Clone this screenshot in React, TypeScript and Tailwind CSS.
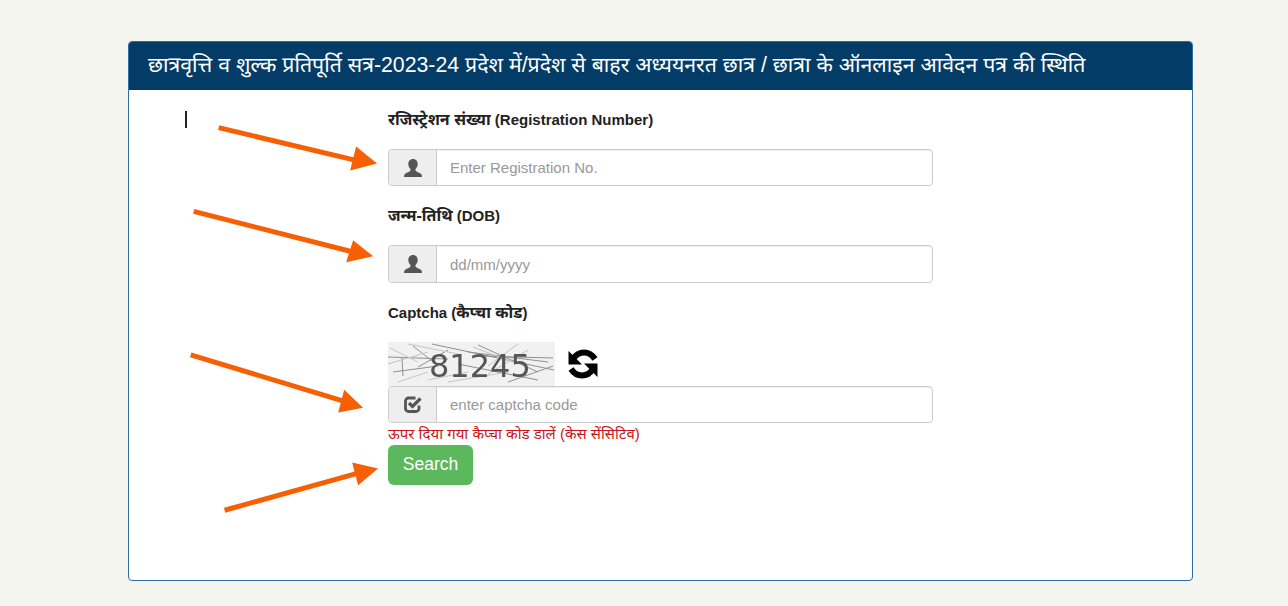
import type { ReactNode } from "react"

const font = "font-['Liberation_Sans','Noto_Sans','Noto_Sans_Devanagari','Lohit_Devanagari',sans-serif]"

function UserIcon() {
  return (
    <svg viewBox="0 0 18 18" className="h-[18px] w-[18px]" fill="#555">
      <path d="M9 0C5.800 0 4.300 2.400 4.300 5C4.300 7.200 5.300 9 6.500 10C6.700 11 6.500 11.800 5.800 12.300C4.500 13.300 1.200 14 .5 15.500C.2 16.200 0 17 0 18H18C18 17 17.800 16.200 17.500 15.500C16.800 14 13.500 13.300 12.200 12.300C11.500 11.800 11.300 11 11.500 10C12.700 9 13.700 7.200 13.700 5C13.700 2.400 12.200 0 9 0Z" />
    </svg>
  )
}

function CheckIcon() {
  return (
    <svg viewBox="0 0 18 17" className="h-[17px] w-[18px]" fill="none" stroke="#555" strokeWidth="2.800">
      <path d="M11.500 2H4.500a3 3 0 0 0-3 3v7.500a3 3 0 0 0 3 3h7.500a3 3 0 0 0 3-3v-3" />
      <path d="M5 7l3.500 3.500L16.500 2.500" strokeWidth="3.200" />
    </svg>
  )
}

function RefreshIcon() {
  return (
    <svg viewBox="0 0 30 30" className="h-[30px] w-[30px]">
      <path d="M5 10C8 5.500 12 3.500 16 3.500C20 3.500 24 5.500 27 10" fill="none" stroke="#000" strokeWidth="6" />
      <path d="M.5 2V15.500H14Z" fill="#000" />
      <g transform="rotate(180 15 15)">
        <path d="M5 10C8 5.500 12 3.500 16 3.500C20 3.500 24 5.500 27 10" fill="none" stroke="#000" strokeWidth="6" />
        <path d="M.5 2V15.500H14Z" fill="#000" />
      </g>
    </svg>
  )
}

function InputRow({ icon, placeholder, className }: { icon: ReactNode; placeholder: string; className: string }) {
  return (
    <div className={`flex w-[545px] rounded border border-[#ccc] bg-white shadow-[inset_0_1px_1px_rgba(0,0,0,0.075)] ${className}`}>
      <div className="flex w-[48px] items-center justify-center rounded-l border-r border-[#ccc] bg-[#eee]">{icon}</div>
      <input
        placeholder={placeholder}
        className="min-w-0 flex-1 bg-transparent px-[13px] pt-[2px] text-[15px] text-[#555] outline-none placeholder:text-[#999]"
      />
    </div>
  )
}

function Captcha() {
  return (
    <div className="relative h-[44px] w-[167px] overflow-hidden bg-[#f1f1f1]">
      <svg viewBox="0 0 167 44" className="absolute inset-0 h-full w-full blur-[0.6px]" stroke="#8f8f8f" strokeWidth="1" fill="none">
        <path d="M0 15 L60 17 M14 16 L15 34 M5 30 L50 24 M44 2 L166 28 M60 8 L30 25 M90 14 L165 16 M120 40 L165 24 M70 22 L150 38 M25 4 L48 22 M80 10 L160 20 M90 3 L150 30" />
        <path d="M2 6 L30 20 M85 5 L130 22 M40 38 L80 30 M0 22 L40 10 M10 40 L40 30 M130 2 L100 24 M60 40 L120 30 M20 2 L70 12 M100 32 L140 8" stroke="#c4c4c4" />
      </svg>
      <span className="absolute left-[41px] top-[5px] font-['DejaVu_Sans',sans-serif] text-[32px] leading-[38px] text-[#555] blur-[0.4px]">81245</span>
    </div>
  )
}

export default function App() {
  return (
    <div className={`${font} min-h-[606px] bg-[#f5f5f0] px-[128px] pt-[41px] text-[#222]`}>
      <div className="relative h-[540px] w-[1065px] overflow-hidden rounded border border-[#2e6da4] bg-white">
        <div className="flex h-[48px] items-center whitespace-nowrap bg-[#033c66] pb-[1px] pl-[19px] text-[21.3px] text-white">
          छात्रवृत्ति व शुल्क प्रतिपूर्ति सत्र-2023-24 प्रदेश में/प्रदेश से बाहर अध्ययनरत छात्र / छात्रा के ऑनलाइन आवेदन पत्र की स्थिति
        </div>

        <div className="flex pl-[56px] pt-[19px]">
          <div className="mt-[2px] h-[17px] w-[2px] bg-[#222]" />
          <div className="ml-[201px] flex flex-col">
            <label className="h-[20px] text-[15px] font-bold leading-[22px]">
              <span className="text-[16px]">रजिस्ट्रेशन संख्या</span> (Registration Number)
            </label>
            <div className="mt-[20px]">
              <InputRow className="h-[37px]" icon={<UserIcon />} placeholder="Enter Registration No." />
            </div>
            <label className="mt-[19px] h-[20px] text-[15px] font-bold leading-[22px]">
              <span className="text-[16px]">जन्म-तिथि</span> (DOB)
            </label>
            <div className="mt-[20px]">
              <InputRow className="h-[38px]" icon={<UserIcon />} placeholder="dd/mm/yyyy" />
            </div>
            <label className="mt-[19px] h-[20px] text-[15px] font-bold leading-[22px]">
              Captcha (<span className="text-[16px]">कैप्चा कोड</span>)
            </label>
            <div className="mt-[20px] flex items-center gap-[13px]">
              <Captcha />
              <RefreshIcon />
            </div>
            <InputRow className="h-[37px]" icon={<CheckIcon />} placeholder="enter captcha code" />
            <div className="h-[20px] text-[15px] leading-[22px] text-[#c9131a]">ऊपर दिया गया कैप्चा कोड डालें (केस सेंसिटिव)</div>
            <button className="mt-[2px] h-[40px] w-[85px] rounded-md bg-[#5cb85c] pb-[2px] text-[17.5px] text-white">Search</button>
          </div>
        </div>

        {/* orange arrows drawn on top of the form */}
        <svg className="pointer-events-none absolute left-0 top-0 h-full w-full" viewBox="0 0 1065 540" fill="#f75f05" stroke="#f75f05" strokeWidth="5">
          <line x1="89" y1="86" x2="228" y2="119" />
          <polygon points="248,122 227,105 221,129" stroke="none" />
          <line x1="64" y1="170" x2="225" y2="211" />
          <polygon points="244,215 224,199 217,221" stroke="none" />
          <line x1="61" y1="314" x2="216" y2="361" />
          <polygon points="234,367 215,349 209,372" stroke="none" />
          <line x1="95" y1="470" x2="228" y2="433" />
          <polygon points="249,428 223,422 229,445" stroke="none" />
        </svg>
      </div>
    </div>
  )
}
